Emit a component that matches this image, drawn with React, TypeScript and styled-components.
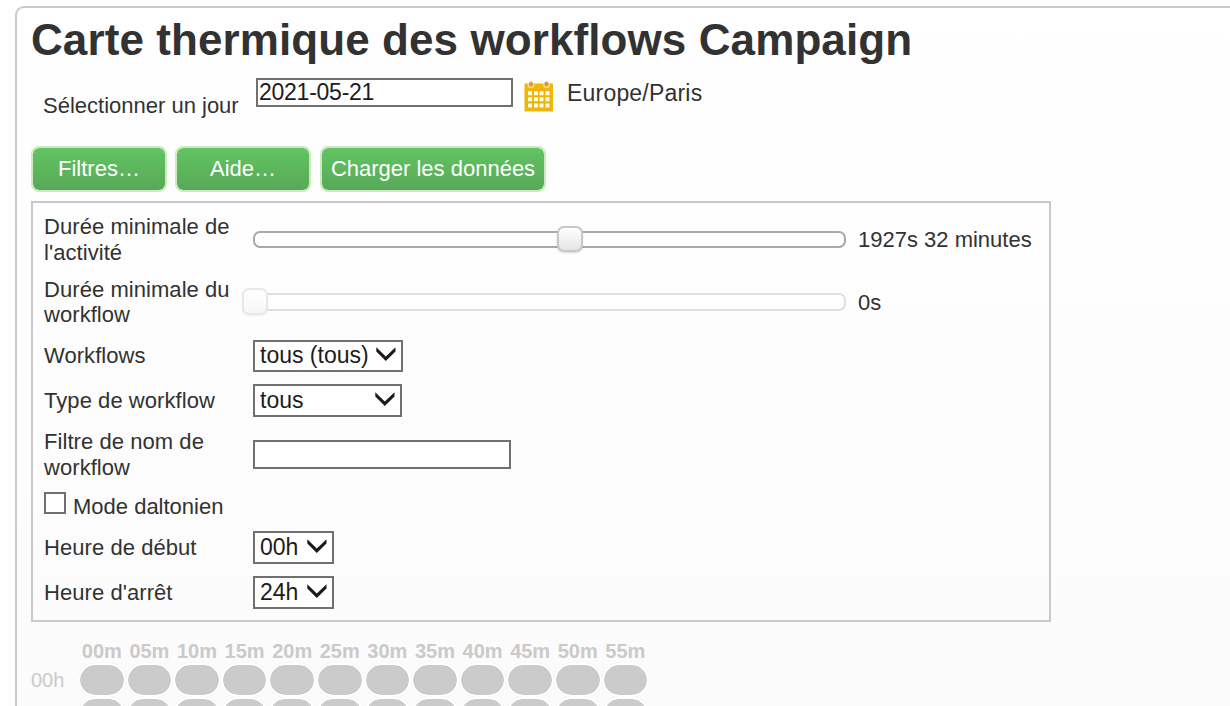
import React from 'react';
import styled, { createGlobalStyle } from 'styled-components';

const GlobalStyle = createGlobalStyle`
  * { box-sizing: border-box; }
  body {
    margin: 0;
    background: #fff;
    color: #323232;
    font: 22px/25.5px "Liberation Sans", Arial, sans-serif;
    overflow: hidden;
  }
`;

const Page = styled.div`
  height: 706px;
  padding: 6px 0 0 15px;
  overflow: hidden;
`;

const Sheet = styled.main`
  height: 720px;
  width: 1240px;
  padding: 0 0 0 14px;
  border: 2px solid #cacaca;
  border-radius: 9px 0 0 0;
  background: linear-gradient(#ffffff, #fbfbfb);
`;

const Title = styled.h1`
  margin: 0;
  height: 70px;
  font-size: 44px;
  line-height: 64px;
  font-weight: bold;
  letter-spacing: 0.09px;
  white-space: nowrap;
`;

const DayRow = styled.div`
  display: flex;
  align-items: flex-start;
  height: 68px;
  padding-left: 12px;
`;

const DayLabel = styled.label`
  width: 213px;
  padding-top: 15px;
`;

const TextInput = styled.input<{ $width: number }>`
  width: ${(p) => p.$width}px;
  height: 29px;
  padding: 0 0 1px 1px;
  border: 2px solid #707070;
  border-radius: 0;
  outline: none;
  background: #fff;
  color: #1c1c1c;
  font: 23px/25px "Liberation Sans", Arial, sans-serif;
  letter-spacing: -0.25px;
`;

const CalendarIcon = styled.svg`
  width: 30px;
  height: 32px;
  margin: 2px 0 0 10.5px;
`;

const Zone = styled.span`
  padding: 3px 0 0 13.5px;
  font-size: 23px;
  letter-spacing: 0.2px;
`;

const Actions = styled.div`
  display: flex;
  gap: 8px;
`;

const ActionButton = styled.button<{ $width: number }>`
  width: ${(p) => p.$width}px;
  height: 46px;
  padding: 0 0 1px;
  border: 2px solid #cfe8c4;
  border-radius: 8px;
  background: linear-gradient(#62c462, #57a957) padding-box;
  color: #fff;
  font: 22px/26px "Liberation Sans", Arial, sans-serif;
  white-space: nowrap;

  &:last-child {
    margin-left: 1px;
  }
`;

const Filters = styled.section`
  width: 1020px;
  height: 421px;
  margin-top: 9px;
  padding: 5px 0 0 11px;
  border: 2px solid #c9c9c9;
`;

const Row = styled.div<{ $height: number }>`
  display: flex;
  align-items: center;
  height: ${(p) => p.$height}px;
`;

const RowLabel = styled.label`
  flex: none;
  width: 209px;
  padding-right: 10px;
  letter-spacing: 0.06px;
`;

const Track = styled.div<{ $disabled?: boolean }>`
  position: relative;
  width: 593px;
  height: ${(p) => (p.$disabled ? 18 : 17)}px;
  border: 2px solid ${(p) => (p.$disabled ? '#dfdfdf' : '#a9a9a9')};
  border-radius: 7px;
  background: #fff;
`;

const Thumb = styled.span<{ $disabled?: boolean }>`
  position: absolute;
  top: -7px;
  width: 26px;
  height: ${(p) => (p.$disabled ? 27 : 26)}px;
  margin-left: -13px;
  border: 2px solid ${(p) => (p.$disabled ? '#e8e8e8' : '#c8c8c8')};
  border-radius: 7px;
  background: ${(p) =>
    p.$disabled ? 'linear-gradient(#ffffff, #f7f7f7)' : 'linear-gradient(#ffffff, #e4e4e4)'};
  box-shadow: 0 1px 2px ${(p) => (p.$disabled ? 'rgba(0,0,0,.06)' : 'rgba(0,0,0,.15)')};
`;

const Value = styled.output`
  padding: 0.8px 0 0 12px;
`;

const SelectBox = styled.div<{ $width: number; $height: number }>`
  display: flex;
  align-items: center;
  justify-content: space-between;
  width: ${(p) => p.$width}px;
  height: ${(p) => p.$height}px;
  padding: 0 5px 0;
  border: 2px solid #707070;
  background: #fff;
  color: #1c1c1c;
  font-size: 23px;
  white-space: nowrap;
`;

const Chevron = styled.svg`
  flex: none;
  width: 20px;
  height: 14px;
  margin-bottom: 3px;
`;

const CheckBox = styled.span`
  width: 22px;
  height: 22px;
  margin: -5px 7px 0 0;
  border: 2px solid #707070;
  background: #fff;
`;

const CheckLabel = styled.label`
  padding-top: 2px;
`;

const Heatmap = styled.div`
  display: grid;
  grid-template-columns: 47px repeat(12, 47.6px);
  grid-template-rows: 25px 34px 34px;
  margin-top: 16px;
  color: #cacaca;
  font-size: 20px;
`;

const Minute = styled.span`
  padding-top: 1px;
  font-weight: bold;
  text-align: center;
`;

const Hour = styled.span`
  padding-top: 5px;
`;

const Cell = styled.span`
  border: 2px solid #fff;
  border-radius: 17px;
  background: #cbcbcb padding-box;
  box-shadow: 0 0 1px #e4e4e4;
`;

const minutes = ['00m', '05m', '10m', '15m', '20m', '25m', '30m', '35m', '40m', '45m', '50m', '55m'];

function Select({ value, width, height = 33 }: { value: string; width: number; height?: number }) {
  return (
    <SelectBox $width={width} $height={height} role="combobox">
      {value}
      <Chevron viewBox="0 0 20 14">
        <path d="M0.3 0.2v4.4L9.8 14l9.7-9.4V0.2L9.8 9.4z" fill="#1b1b1b" />
      </Chevron>
    </SelectBox>
  );
}

function Slider({ position, disabled }: { position: number; disabled?: boolean }) {
  return (
    <Track $disabled={disabled}>
      <Thumb $disabled={disabled} style={{ left: position }} />
    </Track>
  );
}

function Calendar() {
  return (
    <CalendarIcon viewBox="0 0 30 32">
      <rect x="0.5" y="3.5" width="28.5" height="28" fill="#eeb50c" />
      <path d="M3.5 3.5v1.2a3.5 3.5 0 0 0 7 0V3.5M19 3.5v1.2a3.5 3.5 0 0 0 7 0V3.5" fill="#f8d890" />
      <rect x="5" y="1.5" width="4" height="5" rx="2" fill="#ee9426" />
      <rect x="20.5" y="1.5" width="4" height="5" rx="2" fill="#ee9426" />
      <g fill="#fffbe9">
        {[11.2, 17.2, 23.4].map((y) =>
          [4, 10, 15.5, 21.5].map((x) => <rect key={`${x}-${y}`} x={x} y={y} width="4" height="4" rx="0.5" />)
        )}
      </g>
    </CalendarIcon>
  );
}

export default function App() {
  return (
    <Page>
      <GlobalStyle />
      <Sheet>
        <Title>Carte thermique des workflows Campaign</Title>
        <DayRow>
          <DayLabel>Sélectionner un jour</DayLabel>
          <TextInput $width={257} defaultValue="2021-05-21" />
          <Calendar />
          <Zone>Europe/Paris</Zone>
        </DayRow>
        <Actions>
          <ActionButton $width={136}>Filtres…</ActionButton>
          <ActionButton $width={136}>Aide…</ActionButton>
          <ActionButton $width={226}>Charger les données</ActionButton>
        </Actions>
        <Filters>
          <Row $height={63}>
            <RowLabel>Durée minimale de l'activité</RowLabel>
            <Slider position={315} />
            <Value>1927s 32 minutes</Value>
          </Row>
          <Row $height={62}>
            <RowLabel>Durée minimale du workflow</RowLabel>
            <Slider position={0} disabled />
            <Value>0s</Value>
          </Row>
          <Row $height={45}>
            <RowLabel>Workflows</RowLabel>
            <Select value="tous (tous)" width={150} height={32} />
          </Row>
          <Row $height={45}>
            <RowLabel>Type de workflow</RowLabel>
            <Select value="tous" width={149} />
          </Row>
          <Row $height={63}>
            <RowLabel>Filtre de nom de workflow</RowLabel>
            <TextInput $width={258} />
          </Row>
          <Row $height={39}>
            <CheckBox role="checkbox" />
            <CheckLabel>Mode daltonien</CheckLabel>
          </Row>
          <Row $height={45}>
            <RowLabel>Heure de début</RowLabel>
            <Select value="00h" width={81} />
          </Row>
          <Row $height={45}>
            <RowLabel>Heure d'arrêt</RowLabel>
            <Select value="24h" width={81} />
          </Row>
        </Filters>
        <Heatmap>
          <span />
          {minutes.map((m) => (
            <Minute key={m}>{m}</Minute>
          ))}
          <Hour>00h</Hour>
          {minutes.map((m) => (
            <Cell key={m} />
          ))}
          <span />
          {minutes.map((m) => (
            <Cell key={m} />
          ))}
        </Heatmap>
      </Sheet>
    </Page>
  );
}
